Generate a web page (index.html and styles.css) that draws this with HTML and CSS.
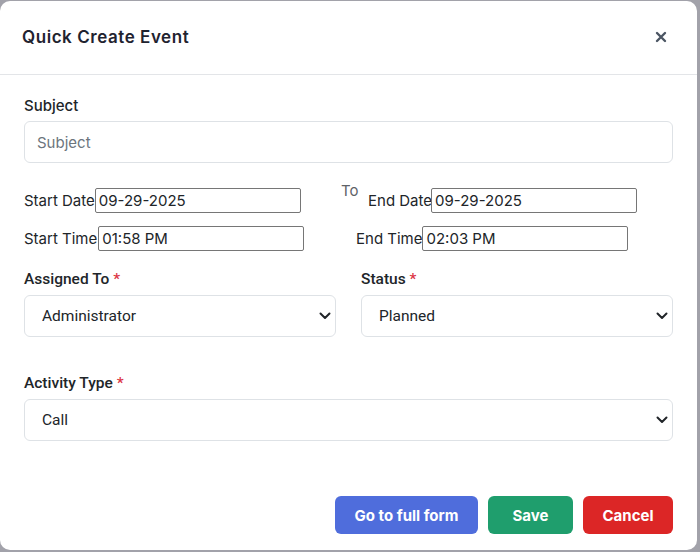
FILE: index.html
```html
<!DOCTYPE html>
<html lang="en">

<head>
  <meta charset="UTF-8" />
  <meta name="viewport" content="width=device-width, initial-scale=1.0" />
  <title>Quick Create Event</title>
  <link rel="stylesheet" href="styles.css">
</head>

<body>
  <div class="modal">
    <div class="modal-header">
      <div class="modal-title">Quick Create Event</div>
      <button class="close-btn" aria-label="Close">
        <svg width="12" height="12" viewBox="0 0 12 12">
          <path d="M2 2 L10 10 M10 2 L2 10" stroke="#4b5563" stroke-width="2.4" stroke-linecap="round" />
        </svg>
      </button>
    </div>

    <div class="modal-body">
      <label class="field-label" for="subject">Subject</label>
      <input type="text" id="subject" class="form-control" placeholder="Subject" autocomplete="off">

      <div class="date-row first">
        <div class="date-left">
          <span class="inline-label">Start Date</span>
          <input type="text" class="plain-input" value="09-29-2025">
        </div>
        <span class="to-text">To</span>
        <span class="inline-label end-date">End Date</span>
        <input type="text" class="plain-input" value="09-29-2025">
      </div>

      <div class="date-row">
        <div class="date-left">
          <span class="inline-label">Start Time</span>
          <input type="text" class="plain-input wide" value="01:58 PM">
        </div>
        <span class="inline-label end-time">End Time</span>
        <input type="text" class="plain-input" value="02:03 PM">
      </div>

      <div class="two-col">
        <div class="col">
          <label class="field-label alt">Assigned To <span class="req">*</span></label>
          <div class="select-wrap">
            <select class="form-select">
              <option>Administrator</option>
            </select>
            <svg class="chevron" width="12" height="8" viewBox="0 0 12 8">
              <path d="M1.5 1.5 L6 6 L10.5 1.5" fill="none" stroke="#212529" stroke-width="2" stroke-linecap="round" stroke-linejoin="round" />
            </svg>
          </div>
        </div>
        <div class="col">
          <label class="field-label alt">Status <span class="req">*</span></label>
          <div class="select-wrap">
            <select class="form-select">
              <option>Planned</option>
            </select>
            <svg class="chevron" width="12" height="8" viewBox="0 0 12 8">
              <path d="M1.5 1.5 L6 6 L10.5 1.5" fill="none" stroke="#212529" stroke-width="2" stroke-linecap="round" stroke-linejoin="round" />
            </svg>
          </div>
        </div>
      </div>

      <div class="activity">
        <label class="field-label alt">Activity Type <span class="req">*</span></label>
        <div class="select-wrap">
          <select class="form-select">
            <option>Call</option>
          </select>
          <svg class="chevron" width="12" height="8" viewBox="0 0 12 8">
            <path d="M1.5 1.5 L6 6 L10.5 1.5" fill="none" stroke="#212529" stroke-width="2" stroke-linecap="round" stroke-linejoin="round" />
          </svg>
        </div>
      </div>
    </div>

    <div class="modal-footer">
      <button class="btn btn-blue">Go to full form</button>
      <button class="btn btn-green">Save</button>
      <button class="btn btn-red">Cancel</button>
    </div>
  </div>
</body>

</html>
```

FILE: styles.css
```css
body {
  margin: 0;
  background-color: #a2a2aa;
  font-family: "Inter", "Liberation Sans", sans-serif;
  color: #212529;
  height: 552px;
  overflow: hidden;
}

.modal {
  margin-top: 1px;
  width: 697px;
  height: 549px;
  background-color: #ffffff;
  border-radius: 10px;
  box-sizing: border-box;
  display: flex;
  flex-direction: column;
}

.modal-header {
  height: 73px;
  border-bottom: 1px solid #e3e5e8;
  display: flex;
  align-items: center;
  justify-content: space-between;
  padding: 0 30px 0 22px;
}

.modal-title {
  font-size: 17px;
  font-weight: 600;
  letter-spacing: 0.55px;
  color: #1f2330;
  margin-top: -2px;
}

.close-btn {
  background: none;
  border: none;
  padding: 0;
  width: 12px;
  height: 12px;
  margin-top: -2px;
  cursor: pointer;
  display: flex;
}

.modal-body {
  padding: 20px 24px 0 24px;
  display: flex;
  flex-direction: column;
}

.field-label {
  font-size: 15px;
  font-weight: 500;
  line-height: 22px;
  margin-bottom: 4px;
}

.field-label.alt {
  font-family: "Roboto", "Liberation Sans", sans-serif;
  font-size: 15.5px;
  margin-bottom: 5px;
}

.req {
  color: #dc3545;
}

.form-control {
  height: 42px;
  border: 1px solid #dee2e6;
  border-radius: 6px;
  padding: 0 12px;
  font-family: "Inter", "Liberation Sans", sans-serif;
  font-size: 15px;
  color: #212529;
  box-sizing: border-box;
  outline: none;
}

.form-control::placeholder {
  color: #6c757d;
}

.date-row {
  display: flex;
  align-items: center;
  margin-top: 13px;
  height: 25px;
}

.date-row.first {
  margin-top: 25px;
}

.date-left {
  width: 317px;
  display: flex;
  align-items: center;
}

.inline-label {
  font-size: 15px;
  white-space: nowrap;
}

.plain-input {
  width: 206px;
  height: 25px;
  border: 1px solid #767676;
  border-radius: 2px;
  padding: 1px 3px;
  font-family: "Inter", "Liberation Sans", sans-serif;
  font-size: 15px;
  color: #212529;
  box-sizing: border-box;
  outline: none;
}

.plain-input.wide {
  margin-left: 1px;
}

.to-text {
  font-size: 15px;
  color: #5f6368;
  align-self: flex-start;
  margin-top: -7px;
  width: 16px;
}

.end-date {
  margin-left: 11px;
  margin-right: -1px;
}

.end-time {
  margin-left: 15px;
}

.two-col {
  display: flex;
  gap: 25px;
  margin-top: 17px;
}

.col {
  flex: 1;
  display: flex;
  flex-direction: column;
}

.col:first-child {
  flex: 0 0 312px;
}

.select-wrap {
  position: relative;
}

.form-select {
  width: 100%;
  height: 42px;
  appearance: none;
  -webkit-appearance: none;
  background-color: #ffffff;
  border: 1px solid #dee2e6;
  border-radius: 6px;
  padding: 0 36px 0 17px;
  font-family: "Roboto", "Liberation Sans", sans-serif;
  font-size: 15.5px;
  color: #212529;
  outline: none;
}

.chevron {
  position: absolute;
  right: 5px;
  top: 17px;
}

.activity {
  display: flex;
  flex-direction: column;
  margin-top: 35px;
}

.modal-footer {
  display: flex;
  justify-content: flex-end;
  gap: 10px;
  padding: 55px 24px 0 0;
}

.btn {
  height: 38px;
  border: none;
  border-radius: 6px;
  color: #ffffff;
  font-family: "Inter", "Liberation Sans", sans-serif;
  font-size: 15px;
  font-weight: 700;
  cursor: pointer;
}

.btn-blue {
  width: 143px;
  background-color: #4f6ddc;
}

.btn-green {
  width: 85px;
  background-color: #1f9e6d;
}

.btn-red {
  width: 90px;
  background-color: #dc2626;
}
```
